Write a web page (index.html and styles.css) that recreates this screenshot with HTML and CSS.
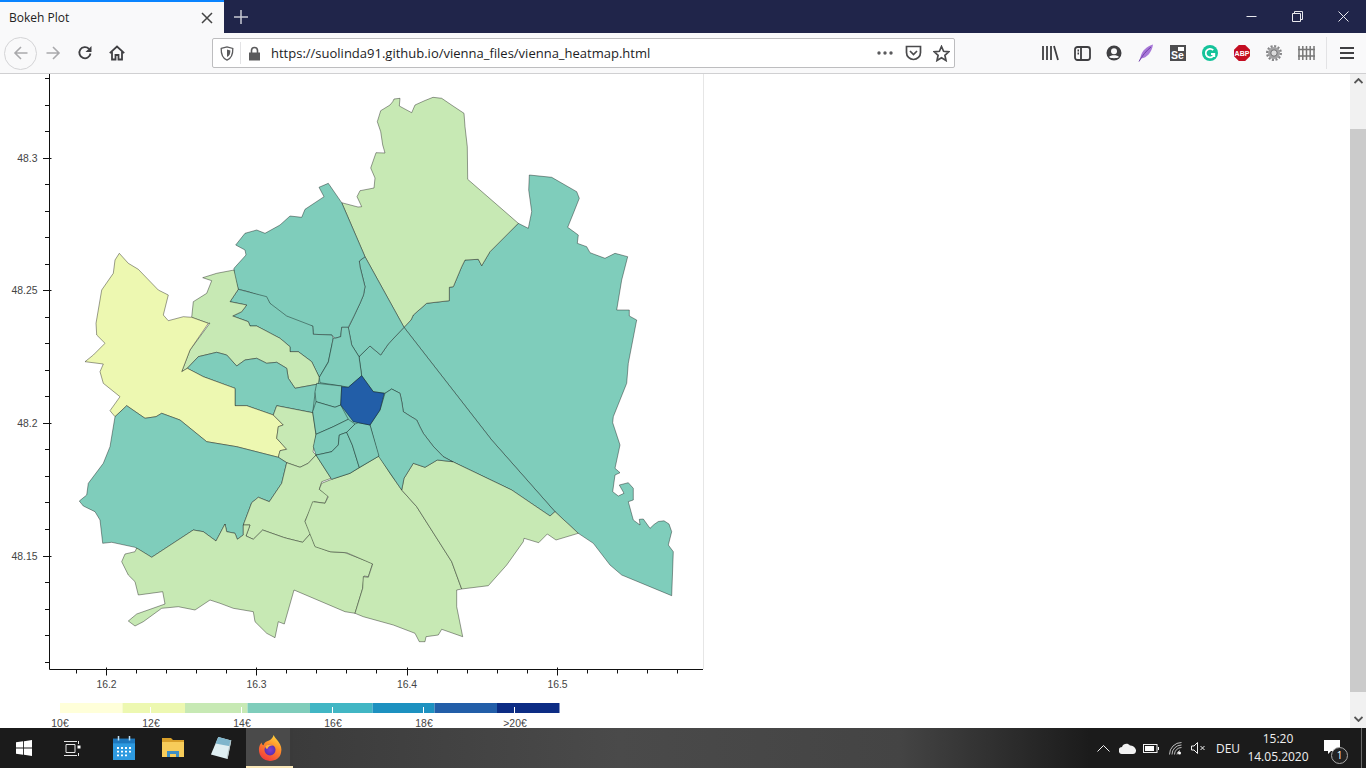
FILE: index.html
```html
<!DOCTYPE html>
<html lang="en">
<head>
<meta charset="utf-8">
<title>Bokeh Plot</title>
<link rel="stylesheet" href="styles.css">
</head>
<body>
<header class="titlebar">
  <div class="tab">
    <span class="tab-title">Bokeh Plot</span>
    <svg class="tab-close" width="12" height="12" viewBox="0 0 12 12"><path d="M1 1l10 10M11 1L1 11"/></svg>
  </div>
  <svg class="new-tab" width="14" height="14" viewBox="0 0 14 14"><path d="M7 0v14M0 7h14"/></svg>
  <div class="win-controls">
    <div class="win-btn"><svg width="11" height="11" viewBox="0 0 11 11"><path d="M.5 5.5h10"/></svg></div>
    <div class="win-btn"><svg width="11" height="11" viewBox="0 0 11 11"><path d="M.5 2.5h8v8h-8zM2.5 2.5v-2h8v8h-2"/></svg></div>
    <div class="win-btn"><svg width="11" height="11" viewBox="0 0 11 11"><path d="M.5.5l10 10M10.5.5l-10 10"/></svg></div>
  </div>
</header>

<nav class="toolbar">
  <div class="nav-buttons">
    <div class="tb-btn back"><svg width="16" height="16" viewBox="0 0 16 16" class="ico-faint"><path d="M14.5 8H2M8 2L2 8l6 6"/></svg></div>
    <div class="tb-btn"><svg width="16" height="16" viewBox="0 0 16 16" class="ico-faint"><path d="M1.500 8H14M8 2l6 6-6 6"/></svg></div>
    <div class="tb-btn"><svg width="16" height="16" viewBox="0 0 16 16" class="ico"><path d="M13.500 8.500A5.600 5.600 0 1 1 12 3.800"/><path class="solid" d="M14.500 1v6h-6z"/></svg></div>
    <div class="tb-btn"><svg width="16" height="16" viewBox="0 0 16 16" class="ico"><path d="M.8 8.200L8 1.500l7.200 6.700M3 6.500V14.500h3.500V10h3v4.500H13V6.500"/></svg></div>
  </div>
  <div class="urlbar">
    <svg class="shield" width="14" height="15" viewBox="0 0 14 15"><path d="M1.200 2.400L7 .9l5.800 1.500c.2 6-1.400 9.800-5.800 11.700C2.600 12.200 1 8.400 1.200 2.400z"/><path class="solid" d="M7 3.500l3.400.9c0 3.400-1 5.400-3.400 6.700z"/></svg>
    <span class="url-divider"></span>
    <svg class="lock" width="13" height="15" viewBox="0 0 13 15"><path class="solid" d="M1 6.500h11v8H1z"/><path d="M3.500 7V4.500a3 3 0 0 1 6 0V7"/></svg>
    <span class="url-text">https://suolinda91.github.io/vienna_files/vienna_heatmap.html</span>
    <svg class="dots" width="16" height="4" viewBox="0 0 16 4"><circle cx="2" cy="2" r="1.700"/><circle cx="8" cy="2" r="1.700"/><circle cx="14" cy="2" r="1.700"/></svg>
    <svg class="url-ico" width="17" height="16" viewBox="0 0 17 16"><path d="M1.500 1.500h14v6a7 7 0 0 1-14 0z"/><path d="M5 6l3.500 3.500L12 6"/></svg>
    <svg class="url-ico star" width="17" height="17" viewBox="0 0 17 17"><path d="M8.500 1.500l2.100 4.800 5.200.5-3.900 3.500 1.100 5.200-4.500-2.700L4 15.500l1.100-5.200L1.200 6.800l5.200-.5z"/></svg>
  </div>
  <div class="tools">
    <div class="tb-btn"><svg width="18" height="16" viewBox="0 0 18 16" class="ico"><path d="M2 1v14M6 1v14M10 1v14M13 1l4 14"/></svg></div>
    <div class="tb-btn"><svg width="17" height="15" viewBox="0 0 17 15" class="ico"><rect x="1" y="1" width="15" height="13" rx="2.500"/><path d="M7 1v13M3.500 4.500h1.500M3.500 7.500h1.500"/></svg></div>
    <div class="tb-btn"><svg width="16" height="16" viewBox="0 0 16 16"><circle cx="8" cy="8" r="7.500" class="fill-dark"/><circle cx="8" cy="6.300" r="3" class="fill-light"/><path class="fill-light" d="M3 12c1.500-2.500 8.500-2.500 10 0-1.500 1.600-8.500 1.600-10 0z"/></svg></div>
    <div class="tb-btn"><svg width="16" height="18" viewBox="0 0 16 18"><path class="feather" d="M15 .5C9 2 4 6.500 2.500 13L1 17.500l2-3C9 14 14 8 15 .5z"/><path class="feather-stem" d="M1 17.500C4 12 8 7 13 3"/></svg></div>
    <div class="tb-btn"><div class="se-badge"><span class="se-cam"></span><span>Se</span></div></div>
    <div class="tb-btn"><svg width="16" height="16" viewBox="0 0 16 16"><circle cx="8" cy="8" r="8" class="fill-green"/><path class="g-mark" d="M11.200 5.200A4.300 4.300 0 1 0 12.300 8.500M9 9h3.300v3"/></svg></div>
    <div class="tb-btn abp-wrap"><svg width="16" height="16" viewBox="0 0 16 16"><path class="fill-red" d="M4.800 0h6.400L16 4.800v6.400L11.200 16H4.800L0 11.200V4.800z"/><text x="8" y="10.700" class="abp-text">ABP</text></svg></div>
    <div class="tb-btn"><svg width="16" height="16" viewBox="0 0 16 16"><circle cx="8" cy="8" r="6.700" class="gear-teeth"/><circle cx="8" cy="8" r="6" class="fill-gear"/><circle cx="8" cy="8" r="3.200" class="fill-gear-in"/></svg></div>
    <div class="tb-btn"><svg width="17" height="14" viewBox="0 0 17 14" class="fence"><path d="M1 0v14M4.800 0v14M8.500 0v14M12.200 0v14M16 0v14M0 3.500h17M0 10h17"/></svg></div>
  </div>
  <span class="tool-sep"></span>
  <div class="tb-btn menu"><svg width="14" height="12" viewBox="0 0 14 12" class="ico"><path d="M0 1h14M0 6h14M0 11h14"/></svg></div>
</nav>

<main class="viewport">
  <div class="page">
    <svg class="plot" width="1350" height="654" viewBox="0 74 1350 654">
      <line class="outline" x1="703.500" y1="74" x2="703.500" y2="669"/>

      <!-- districts -->
      <polygon class="d-fill" points="320,345 365,345 400,395 400,480 331,478 316,456 312,412 316,384"/>
      <polygon class="d d-teal" points="518.3,223.3 528.3,228.3 531.7,211.7 528.7,190 529.3,175 551.7,177.3 576.7,191.7 579.3,198.300 574,211.7 567.7,227.3 578.3,235 577.3,243.3 586.7,246.7 590,252.7 605,258.3 615,253.3 627.7,256.7 621.7,280 616.7,310 629.3,310 629.3,316 636.7,320 628.3,363.3 626.7,383.3 613.3,416.7 612.7,422.7 620,445 615,468.3 620,472.7 615,475 612.7,491.7 618.3,496 624,493.3 619.3,485 628.3,482.7 633.3,488.3 633.3,500 628.3,501.7 633.3,520 640,525 639.3,519.3 643.3,519 650,528.3 654,524.500 658.3,521.500 664,520.800 669,524 671.7,531.7 668.3,545 673.3,551.7 671.7,595.7 621.7,575 610,565 593.3,543.3 578.3,533.3 555,511.7 491.7,440 404,327.3 411,320 413.3,315 426.700,303.300 449.300,300.700 449.300,287.300 453.300,286.700 461.700,266.700 465,260 478.300,259.300 481.700,265.700 490,251.700"/>
      <polygon class="d d-green" points="341.7,202.7 358,207 361.7,206.7 357,196.7 360,190.7 374,188 375,178 370.7,168 376,152.7 385,153 382.7,145 380.7,131.7 377.3,121.700 380.700,110.700 390,105 392.700,101.700 394,99 400,98.300 399.300,106 411.700,112.700 415,105 425,100.500 433,97.300 441.700,98.300 453,106 464,113.300 465,126.700 467.300,146.700 467.700,179.300 518.300,223.300 490,251.700 481.700,265.700 478.300,259.300 465,260 461.700,266.700 453.300,286.700 449.300,287.300 449.300,300.700 426.700,303.300 413.300,315 411,320 404,327.300 365,256.700"/>
      <polygon class="d d-teal" points="404,327.300 491.700,440 555,511.700 550,516 511.700,490 452.700,461.700 443.300,456.700 433,446 423.300,433.300 420,427 416.700,420 410,416 403.300,411.700 402,403 400,393.300 391.700,389 385,393.300 373.300,391.700 361.700,375.700 359,356.700 370,346 380.700,355 388.300,344"/>
      <polygon class="d d-teal" points="365,256.700 404,327.300 388.300,344 380.700,355 370,346 359,356.700 351.700,345 348.300,328 354,316 360,303.300 363.500,295 365,286.700 360,266.700 359.300,261"/>
      <polygon class="d d-teal" points="319,187.300 328.300,183.300 341.700,202.700 365,256.700 359.300,261 360,266.700 365,286.700 363.500,295 360,303.300 354,316 348.300,327.300 341.700,327.300 340.700,336.700 335,338.300 331.700,335 313.300,334.300 312.700,326 301.700,325 286.700,316.700 271.700,306.700 266.700,298.300 248.300,291.700 238.300,289.300 234,275 234,268.300 246,255 245,250 235.700,245 245,233.300 256.700,230 265,233.300 280,225 290,216 301.700,217.300 305,209.300 324,196.700"/>
      <polygon class="d d-teal" points="238.300,289.300 230,301.700 246.700,305 241.700,311.700 232.700,316 248.300,321.700 250,326 256.700,326 280,338.300 290,346.700 290,351.700 298.300,351.700 311.700,361.700 319.300,377.300 328.300,361.700 333.300,338 331.700,335 313.300,334.300 312.700,326 286.700,316 270,303.300 266.700,296.700"/>
      <polygon class="d d-green" points="234,270 216.700,273.300 202.700,277.700 211.700,280.700 206.700,293.300 193.300,301.700 191.700,317.300 208.300,323.300 210,323 190,350 181.700,371.700 187.300,368.300 198.300,356.700 216.700,352.300 226.700,355 236.700,366 245,360 256.700,358.300 266.700,363.300 276.700,362.300 286.700,368.300 288.300,378.300 295,388.300 318.300,384 319.300,377.300 311.700,361.700 298.300,351.700 290,351.700 290,346.700 280,338.300 256.700,326 250,326 248.300,321.700 232.700,316 241.700,311.700 246.700,305 230,301.700 238.300,289.300"/>
      <polygon class="d d-teal" points="187.300,368.300 198.300,356.700 216.700,352.300 226.700,355 236.700,366 245,360 256.700,358.300 266.700,363.300 276.700,362.300 286.700,368.300 288.300,378.300 295,388.300 318.300,384 315,393.300 312.700,412.700 276.700,405.700 273.300,415 246.700,405.700 235,405.700 235,388.300 224,384.300 203.300,376.700"/>
      <polygon class="d d-yellow" points="119.300,253.300 128.300,263.300 138.300,269.300 158.300,290 168.300,295 163.300,315 168.300,320.700 183.300,316.700 191.700,317.300 208.300,323.300 190,350 181.700,371.700 187.300,368.300 203.300,376.700 224,384.300 235,388.300 235,405.700 246.700,405.700 273.300,415 283.300,425 278.300,426.700 276.700,438.300 286.700,449.300 280,450.700 278.300,457.300 236.700,446.700 206.700,441.700 180,420 161.700,413.300 156,416.700 145,418.300 126.700,405.700 115,416.700 110,410.700 120,396.700 103.300,383.300 100,371.700 103.300,364 85,361.700 93.300,355 105,343.300 96.700,335 96,323.300 101.700,290 113.300,273.300 115,260"/>
      <polygon class="d d-green" points="273.300,415 276.700,405.700 312.700,412.700 316,435 313,452 316,455 308.300,463.300 300,467.300 286.700,462.700 278.300,457.300 280,450.700 286.700,449.300 276.700,438.300 278.300,426.700 283.300,425"/>
      <polygon class="d d-teal" points="126.700,405.700 115,416.700 110,446.700 103.300,463.300 88.300,483.300 86.700,495 79.300,501 83.300,506 95,511.700 100,520 102.700,543.300 111.700,542.300 135,547.300 151.700,557.300 193.300,530 203.300,531.700 216,541 225,524 226.700,531.700 235,533.300 237.300,539.300 243.300,535 243.300,525 251.700,502.700 258.300,497.300 269.300,501.700 281.700,483.300 286.700,462.700 278.300,457.300 236.700,446.700 206.700,441.700 180,420 161.700,413.300 156,416.700 145,418.300"/>
      <polygon class="d d-green" points="286.700,462.700 300,467.300 308.300,463.300 316,455 331,478.300 321.700,481.700 319.300,489.300 328.300,495 325,503.300 314.300,501.700 305,521 310.700,533.300 302.700,542.300 286.700,538.300 283.300,537.300 262.700,530 253.300,539.300 246,536 250,525 243.300,525 251.700,502.700 258.300,497.300 269.300,501.700 281.700,483.300"/>
      <polygon class="d d-green" points="121.700,561.700 125,554 135,551.700 136.700,548 151.700,557.300 193.300,530 203.300,531.700 216,541 225,524 226.700,531.700 235,533.300 237.300,539.300 243.300,535 243.300,525 250,525 246,536 253.300,539.300 262.700,530 283.300,537.300 286.700,538.300 302.700,542.300 310.700,533.300 315,546 330,551.700 345,552.700 372.700,563.300 368.300,576.700 364,576 362.700,588.300 355,613.300 345,611.700 294,590 284.300,624 278.300,621.700 275,637.700 266.700,633.300 255,621.700 253.300,611.700 233.300,608.300 220,603.300 210,600 195,610 178.300,606.700 161.700,608.300 143.300,621.700 135,626 128.300,621 136.700,614 165,604 162.700,591.700 138.300,595 135,581.700 128.300,575"/>
      <polygon class="d d-green" points="331.700,479.300 350,473.300 379,456 390,473.300 401.700,490 416.700,506.700 451.700,561.700 461.700,589 456.700,590 456.700,606.700 462.700,636.700 441.700,629.300 438.300,635 426,636.700 425,641.700 419.300,641.700 415,633.300 393.300,625 363.300,616.700 355,613.300 362.700,588.300 363.300,576.700 368.300,577.300 372.700,564 346.700,552.700 330,551.700 315,546.700 305,521.700 312.700,501.700 325,503.300 328.300,496.700 319.300,489.300 321.700,483.300"/>
      <polygon class="d d-green" points="401.700,490 404,478.300 413.300,463.300 425,467.300 437.300,460 452.700,461.700 511.700,490 550,516 555,511.700 578.300,533.300 556,540 547.300,534 538.700,542.700 524,538.300 523.300,541.700 506.700,565 488.300,585.700 461.700,589 451.700,561.700 416.700,506.700"/>
      <polygon class="d d-teal" points="385,393.300 391.700,389 400,393.300 402,403 403.300,411.700 410,416 416.700,420 420,427 423.300,433.300 433,446 443.300,456.700 452.700,461.700 437.300,460 425,467.300 413.300,463.300 404,478.300 401.700,490 378.300,456 370,425 380,410"/>
      <polygon class="d d-teal" points="333.300,338 335,338.300 340.700,336.700 341.700,327.300 348.300,327.300 351.700,345 359,356.700 361.700,375.700 348.300,387.300 341.700,386 320,382.700 319.300,377.300 328.300,362.300"/>
      <polygon class="d d-teal" points="316.700,383.300 341.700,386 340.700,405 335,407.300 316,401.700 315,391.700"/>
      <polygon class="d d-teal" points="316,401.700 335,407.300 340.700,405 348.300,419.300 333.300,426.700 316,434.300 312.700,411.700"/>
      <polygon class="d d-teal" points="316,434.300 333.300,426.700 348.300,419.300 355,424 346.700,432.300 339.300,435 338.300,445 331.700,451.700 320,454.300 316,455 313.300,446.700"/>
      <polygon class="d d-teal" points="316,455 320,454.300 331.700,451.700 338.300,445 339.300,435 346.700,432.300 352.300,445 359.300,467.500 350,473.300 331.700,479.300"/>
      <polygon class="d d-teal" points="346.700,432.300 355,424 358.300,422.700 370,425 379,456 359.300,467.500 352.300,445"/>
      <polygon class="d d-blue" points="361.700,375.700 373.300,391.700 384.300,393.300 380,410 370,425 358.300,422.700 353.300,421.700 340.700,405 341.700,386.700 348.300,387.300"/>

      <!-- axes -->
      <g class="axis">
        <path d="M49.500 74V669.500H703"/>
        <path d="M43 158.500h8.500M43 290.500h8.500M43 423.500h8.500M43 556.500h8.500"/>
        <path d="M45 78.500h4M45 105.500h4M45 131.500h4M45 184.500h4M45 211.500h4M45 237.500h4M45 264.500h4M45 317.500h4M45 343.500h4M45 370.500h4M45 396.500h4M45 449.500h4M45 476.500h4M45 502.500h4M45 529.500h4M45 582.500h4M45 609.500h4M45 635.500h4M45 662.500h4"/>
        <path d="M106.500 667.500v8M256.500 667.500v8M407.500 667.500v8M557.500 667.500v8"/>
        <path d="M76.500 669v4.500M136.500 669v4.500M166.500 669v4.500M196.500 669v4.500M226.500 669v4.500M286.500 669v4.500M316.500 669v4.500M346.500 669v4.500M376.500 669v4.500M437.500 669v4.500M467.500 669v4.500M497.500 669v4.500M527.500 669v4.500M587.500 669v4.500M617.500 669v4.500M647.500 669v4.500M677.500 669v4.500"/>
      </g>
      <g class="tick-labels">
        <text class="end" x="37.500" y="162">48.3</text>
        <text class="end" x="37.500" y="294">48.25</text>
        <text class="end" x="37.500" y="427">48.2</text>
        <text class="end" x="37.500" y="560">48.15</text>
        <text x="106.500" y="688">16.2</text>
        <text x="256.500" y="688">16.3</text>
        <text x="407" y="688">16.4</text>
        <text x="557.500" y="688">16.5</text>
      </g>

      <!-- colour bar -->
      <rect class="c1" x="60" y="703" width="62.500" height="10"/>
      <rect class="c2" x="122.500" y="703" width="62.500" height="10"/>
      <rect class="c3" x="185" y="703" width="62.500" height="10"/>
      <rect class="c4" x="247.500" y="703" width="62.500" height="10"/>
      <rect class="c5" x="310" y="703" width="62.500" height="10"/>
      <rect class="c6" x="372.500" y="703" width="62" height="10"/>
      <rect class="c7" x="434.500" y="703" width="62.500" height="10"/>
      <rect class="c8" x="497" y="703" width="62.500" height="10"/>
      <path class="bar-ticks" d="M150.500 707v6M241.500 707v6M332.500 707v6M423.500 707v6M514.500 707v6"/>
      <g class="tick-labels">
        <text x="60" y="727">10€</text>
        <text x="151" y="727">12€</text>
        <text x="242" y="727">14€</text>
        <text x="333" y="727">16€</text>
        <text x="424" y="727">18€</text>
        <text x="515" y="727">&gt;20€</text>
      </g>
    </svg>
  </div>
  <aside class="scrollbar">
    <svg class="sb-arrow" width="9" height="6" viewBox="0 0 9 6"><path d="M.5 5l4-4 4 4"/></svg>
    <div class="sb-thumb"></div>
    <svg class="sb-arrow" width="9" height="6" viewBox="0 0 9 6"><path d="M.5 1l4 4 4-4"/></svg>
  </aside>
</main>

<footer class="taskbar">
  <div class="task-btn"><svg width="16" height="16" viewBox="0 0 17 17" class="win-logo"><path d="M0 2.400L7.600 1.300v6.800H0zM8.500 1.200L17 0v8.100H8.500zM0 9h7.600v6.800L0 14.700zM8.500 9H17v8l-8.500-1.200z"/></svg></div>
  <div class="task-btn"><svg width="17" height="17" viewBox="0 0 17 17" class="task-view"><path d="M2 4.500h9v8H2zM0 1.500h13M0 15.500h13M14.500 1v3M14.500 13v3"/><path class="solid-white" d="M13.500 5.500h3v3h-3z"/></svg></div>
  <div class="task-spacer"></div>
  <div class="task-btn wide"><svg width="22" height="24" viewBox="0 0 22 26" preserveAspectRatio="none"><path class="cal-body" d="M0 3h22v23H0z"/><path class="cal-head" d="M0 3h22v5H0z"/><path class="cal-pins" d="M5.500 0v5M16.500 0v5"/><path class="cal-dots" d="M4 12h2v2H4zM8 12h2v2H8zM12 12h2v2h-2zM16 12h2v2h-2zM4 16h2v2H4zM8 16h2v2H8zM12 16h2v2h-2zM16 16h2v2h-2zM4 20h2v2H4zM8 20h2v2H8zM12 20h2v2h-2z"/></svg></div>
  <div class="task-btn wide"><svg width="22" height="20" viewBox="0 0 22 20"><path class="fold-back" d="M0 0h9l2 2h11v4H0z"/><path class="fold-front" d="M0 4h22v15H0z"/><path class="fold-blue" d="M5 13h12v6h-3v-3H8v3H5z"/></svg></div>
  <div class="task-btn wide"><svg width="24" height="24" viewBox="0 0 24 26"><path class="note-page" d="M8 1l14 4-4 20L0 20z"/><path class="note-shade" d="M8 1l14 4-1.500 6L5 8z"/><path class="note-edge" d="M18 25l1.500-7 2.500-13-1 0-4 19z"/></svg></div>
  <div class="task-btn firefox">
    <svg width="24" height="26" viewBox="0 0 26 28">
      <defs>
        <linearGradient id="ffOuter" x1="0.700" y1="0" x2="0.200" y2="1"><stop offset="0" stop-color="#ffd43d"/><stop offset=".4" stop-color="#ff8a2a"/><stop offset="1" stop-color="#f0343f"/></linearGradient>
        <radialGradient id="ffInner" cx=".5" cy=".5" r=".5"><stop offset="0" stop-color="#7f3fd0"/><stop offset="1" stop-color="#5b2fb0"/></radialGradient>
      </defs>
      <path fill="url(#ffOuter)" d="M17 0c1 3 3 4 5 7 3 4 4 8 3 12-1 6-6 9-12 9C6 28 1 23 1 16c0-3 1-6 3-8 0 2 1 3 2 3 1-3 3-4 6-5 2-1 4-3 5-6z"/>
      <circle cx="13" cy="16" r="6" fill="url(#ffInner)"/>
      <path fill="#ffb13a" d="M8 12c2-2 6-3 9-1-3 0-6 1-7 4-1 0-2-1-2-3z"/>
    </svg>
  </div>
  <div class="tray">
    <div class="tray-item"><svg width="13" height="8" viewBox="0 0 13 8" class="tray-line"><path d="M.5 7.500l6-6 6 6"/></svg></div>
    <div class="tray-item"><svg width="17" height="11" viewBox="0 0 17 11"><path class="cloud" d="M3.500 11A3.500 3.500 0 0 1 3 4c1-3 5.500-4.500 8-1.500 3-.5 5.500 2 6 4.500.2 2.500-1 4-3 4z"/></svg></div>
    <div class="tray-item"><svg width="16" height="9" viewBox="0 0 16 9" class="tray-line"><rect x=".5" y=".5" width="13.500" height="8"/><path class="solid-white" d="M2 2h9v5H2zM15 3h1v3h-1z"/></svg></div>
    <div class="tray-item"><svg width="13" height="13" viewBox="0 0 13 13" class="tray-faint"><path d="M.5 12.500a12 12 0 0 1 12-12M3 12.500a9.500 9.500 0 0 1 9.500-9.500M5.500 12.500a7 7 0 0 1 7-7M8 12.500a4.500 4.500 0 0 1 3-4"/><circle class="solid-white" cx="10.500" cy="11" r="1.500"/></svg></div>
    <div class="tray-item speaker"><svg width="15" height="12" viewBox="0 0 15 12" class="tray-line"><path d="M.5 4h2.500L6.500.5v11L3 8H.5zM9.500 4l4 4M13.500 4l-4 4"/></svg></div>
    <div class="tray-lang">DEU</div>
    <div class="clock"><span>15:20</span><span>14.05.2020</span></div>
    <div class="notify">
      <svg width="16" height="14" viewBox="0 0 16 14"><path class="solid-white" d="M0 0h16v11H7l-3 3v-3H0z"/></svg>
      <span class="notify-badge">1</span>
    </div>
    <span class="show-desktop"></span>
  </div>
</footer>
</body>
</html>
```

FILE: styles.css
```css
* { box-sizing: border-box; }
html, body { margin: 0; padding: 0; height: 100%; }
body {
  width: 1366px;
  height: 768px;
  overflow: hidden;
  display: flex;
  flex-direction: column;
  font-family: "Open Sans", "Liberation Sans", sans-serif;
  background: #fff;
}
svg { display: block; fill: none; }

/* title bar */
.titlebar {
  height: 33px;
  flex: none;
  display: flex;
  align-items: center;
  background: #20254a;
}
.tab {
  width: 224px;
  height: 33px;
  flex: none;
  display: flex;
  align-items: center;
  justify-content: space-between;
  padding: 0 11px 0 9px;
  background: #f9f9fa;
  border-top: 2px solid #0a84ff;
}
.tab-title { font-size: 12px; color: #222; }
.tab-close path { stroke: #444; stroke-width: 1.500; }
.new-tab { margin-left: 10px; }
.new-tab path { stroke: #c8cad4; stroke-width: 1.500; }
.win-controls { margin-left: auto; display: flex; height: 33px; }
.win-btn { width: 46px; display: flex; align-items: center; justify-content: center; }
.win-btn path { stroke: #e8e9ee; stroke-width: 1; }

/* tool bar */
.toolbar {
  height: 41px;
  flex: none;
  display: flex;
  align-items: center;
  padding: 0 0 0 5px;
  background: #f9f9fa;
  border-bottom: 1px solid #d0d0d2;
}
.nav-buttons, .tools { display: flex; flex: none; align-items: center; }
.tb-btn {
  width: 32px;
  height: 32px;
  flex: none;
  display: flex;
  align-items: center;
  justify-content: center;
}
.tb-btn.back { border: 1px solid #d4d4d6; border-radius: 50%; width: 33px; height: 33px; margin-left: -1px; }
.ico path, .ico rect { stroke: #3f3f42; stroke-width: 1.800; }
.ico .solid { fill: #3f3f42; stroke: none; }
.ico-faint path { stroke: #a9a9ac; stroke-width: 1.600; }
.urlbar {
  width: 743px;
  height: 30px;
  margin-left: 79px;
  flex: none;
  display: flex;
  align-items: center;
  background: #fff;
  border: 1px solid #bdbdbf;
  border-radius: 2px;
  padding: 0 4px 0 7px;
}
.shield path { stroke: #5a5a5c; stroke-width: 1.300; }
.shield .solid { fill: #5a5a5c; stroke: none; }
.url-divider { width: 1px; height: 22px; background: #e3e3e5; margin: 0 7px 0 6px; }
.lock path { stroke: #5a5a5c; stroke-width: 1.600; }
.lock .solid { fill: #5a5a5c; stroke: none; }
.url-text { font-size: 13px; color: #1c1c1e; margin-left: 10px; flex: 1; white-space: nowrap; }
.dots { margin-right: 10px; }
.dots circle { fill: #5a5a5c; }
.url-ico { margin-left: 2px; }
.url-ico path { stroke: #4a4a4c; stroke-width: 1.700; }
.url-ico.star { margin-left: 11px; }
.tools { margin-left: 79px; }
.fill-dark { fill: #3f3f42; }
.fill-light { fill: #f9f9fa; }
.feather { fill: #a878d8; }
.feather-stem { stroke: #6f3fa8; stroke-width: 1; }
.se-badge {
  width: 16px;
  height: 16px;
  background: #4d4d4f;
  color: #fff;
  font: 700 10.500px/1 "Liberation Sans", sans-serif;
  display: flex;
  flex-direction: column;
  align-items: flex-start;
  justify-content: flex-end;
  position: relative;
  padding: 0 0 1px 1px;
}
.se-cam { position: absolute; right: 2px; top: 2px; width: 6px; height: 4px; background: #fff; }
.fill-green { fill: #15c39a; }
.g-mark { stroke: #fff; stroke-width: 1.800; }
.fill-red { fill: #c40e22; }
.abp-text { fill: #fff; font: 700 7px "Liberation Sans", sans-serif; text-anchor: middle; }
.gear-teeth { stroke: #858587; stroke-width: 2.600; stroke-dasharray: 2 1.500; }
.fill-gear { fill: #a2a2a4; }
.fill-gear-in { fill: #dcdcdd; stroke: #6f6f71; }
.fence path { stroke: #777; stroke-width: 1.500; }
.tool-sep { width: 1px; height: 32px; background: #e3e3e5; margin-left: 4px; flex: none; }
.tb-btn.menu { margin-left: 4px; }

/* page */
.viewport { flex: 1; display: flex; min-height: 0; }
.page { flex: 1; min-width: 0; overflow: hidden; }
.scrollbar {
  width: 16px;
  flex: none;
  background: #f1f1f1;
  display: flex;
  flex-direction: column;
  align-items: center;
  padding: 4px 0 6px;
}
.sb-arrow path { stroke: #555; stroke-width: 1.800; }
.sb-thumb { flex: none; width: 16px; height: 563px; margin: 45px 0 24px; background: #cbcbcb; }

/* plot */
.outline { stroke: #e6e6e6; stroke-width: 1; }
.d-fill { fill: #7fcdbb; }
.d { stroke: #000; stroke-opacity: .38; stroke-width: 1; stroke-linejoin: round; }
.d-yellow { fill: #edf8b1; }
.d-green { fill: #c7e9b4; }
.d-teal { fill: #7fcdbb; }
.d-blue { fill: #225ea8; }
.axis path { stroke: #111; stroke-width: 1; fill: none; }
.tick-labels text {
  font-family: "Liberation Sans", Arial, sans-serif;
  font-size: 10.400px;
  fill: #444;
  text-anchor: middle;
}
.tick-labels text.end { text-anchor: end; }
.c1 { fill: #ffffd9; }
.c2 { fill: #edf8b1; }
.c3 { fill: #c7e9b4; }
.c4 { fill: #7fcdbb; }
.c5 { fill: #41b6c4; }
.c6 { fill: #1d91c0; }
.c7 { fill: #225ea8; }
.c8 { fill: #0c2c84; }
.bar-ticks { stroke: #fff; stroke-width: 1; }

/* task bar */
.taskbar {
  height: 40px;
  flex: none;
  display: flex;
  align-items: center;
  background: linear-gradient(90deg, #1b1b1b 0, #1b1b1b 293px, #3b3b3b 293px, #4a4a4a 620px, #444 900px, #1b1b1b 1090px);
  color: #f0f0f0;
}
.task-btn {
  width: 48px;
  height: 40px;
  flex: none;
  display: flex;
  align-items: center;
  justify-content: center;
}
.task-btn.wide { width: 49px; }
.task-spacer { width: 3px; flex: none; }
.win-logo path { fill: #fff; }
.task-view path { stroke: #e8e8e8; stroke-width: 1; }
.task-view .solid-white, .solid-white { fill: #fff; stroke: none; }
.cal-body { fill: #2e9ae0; }
.cal-head { fill: #1d77bd; }
.cal-pins { stroke: #bfe0f5; stroke-width: 1.500; }
.cal-dots { fill: #fff; }
.fold-back { fill: #d9a02a; }
.fold-front { fill: #f7cc5a; }
.fold-blue { fill: #3f8fc4; }
.note-page { fill: #dfeff2; }
.note-shade { fill: #7fb6cc; }
.note-edge { fill: #b7c6c8; }
.task-btn.firefox {
  width: 47px;
  background: linear-gradient(90deg, #4a4a4a 0, #4a4a4a 44px, #3a3a3a 44px);
  border-bottom: 2px solid #fae8b8;
  padding-top: 2px;
}
.tray { margin-left: auto; display: flex; align-items: center; height: 40px; }
.tray-item { width: 24px; display: flex; justify-content: center; }
.tray-item.speaker { width: 22px; }
.tray-line path, .tray-line rect { stroke: #f0f0f0; stroke-width: 1; }
.tray-line .solid-white { stroke: none; }
.tray-faint path { stroke: #bdbdbd; stroke-width: 1; }
.cloud { fill: #f2f2f2; }
.tray-lang { width: 38px; text-align: center; font-size: 12px; color: #f0f0f0; }
.clock {
  width: 62px;
  display: flex;
  flex-direction: column;
  align-items: center;
  font-size: 12px;
  line-height: 18px;
  color: #f0f0f0;
}
.notify { position: relative; width: 46px; height: 40px; display: flex; align-items: center; justify-content: center; padding-bottom: 2px; }
.notify-badge {
  position: absolute;
  left: 22px;
  top: 19px;
  width: 17px;
  height: 17px;
  border-radius: 50%;
  background: #222;
  border: 1px solid #aaa;
  color: #fff;
  font-size: 10px;
  line-height: 15px;
  text-align: center;
}
.show-desktop { width: 1px; height: 40px; background: #6a6a6a; margin-left: 6px; margin-right: 4px; }
```
